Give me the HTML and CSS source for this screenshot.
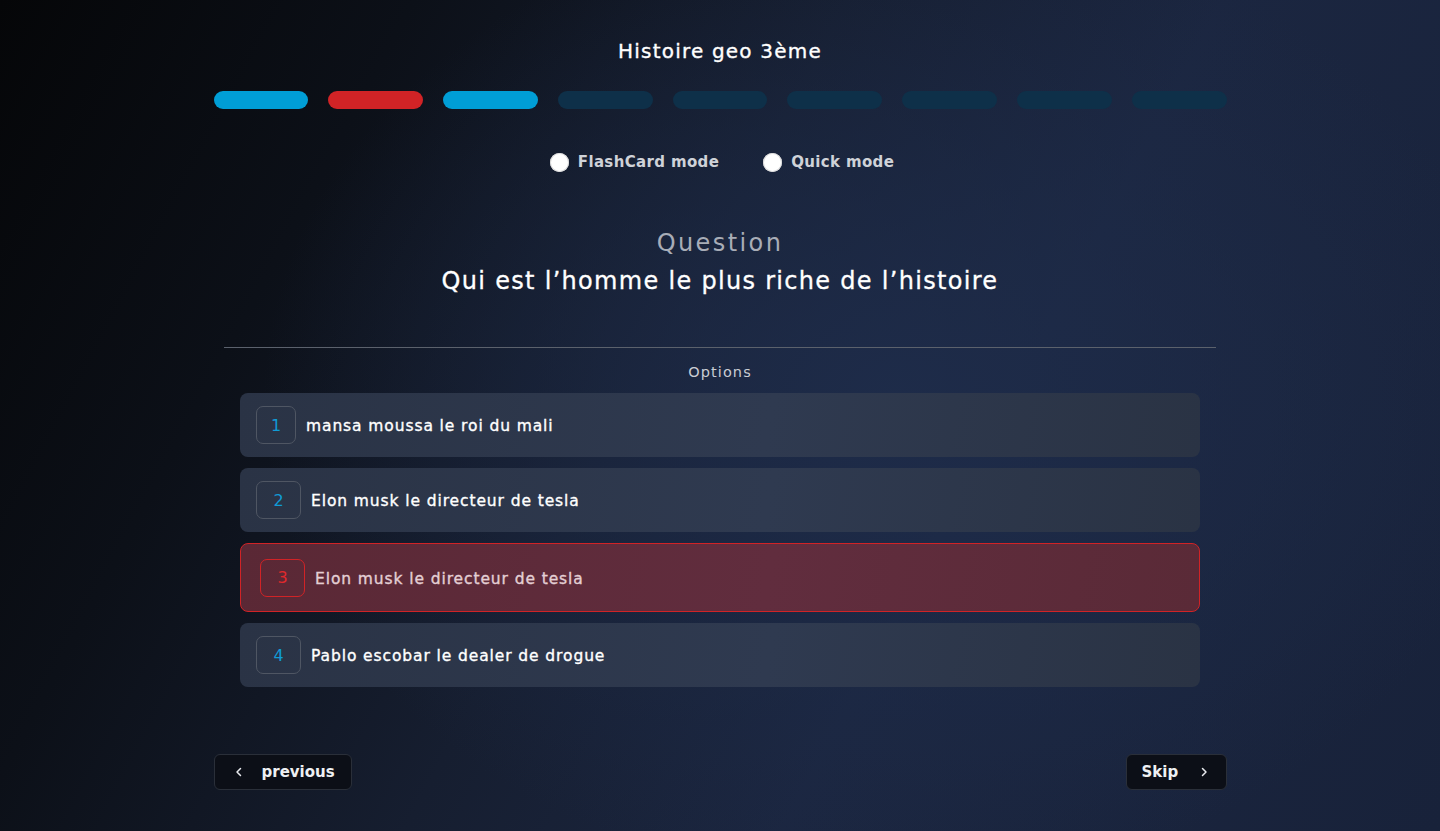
FILE: index.html
```html
<!DOCTYPE html>
<html lang="fr">
<head>
<meta charset="utf-8">
<title>Histoire geo 3ème</title>
<link rel="stylesheet" href="styles.css">
</head>
<body>
<main class="quiz">
  <h1 class="title">Histoire geo 3ème</h1>
  <div class="progress">
    <span class="bar done"></span>
    <span class="bar wrong"></span>
    <span class="bar done"></span>
    <span class="bar"></span>
    <span class="bar"></span>
    <span class="bar"></span>
    <span class="bar"></span>
    <span class="bar"></span>
    <span class="bar"></span>
  </div>
  <div class="modes">
    <label class="mode"><span class="radio"></span>FlashCard mode</label>
    <label class="mode"><span class="radio"></span>Quick mode</label>
  </div>
  <p class="q-label">Question</p>
  <h2 class="q-text">Qui est l’homme le plus riche de l’histoire</h2>
  <hr class="divider">
  <p class="opt-label">Options</p>
  <ul class="options">
    <li class="option"><span class="num">1</span><span class="opt-text">mansa moussa le roi du mali</span></li>
    <li class="option"><span class="num wide">2</span><span class="opt-text">Elon musk le directeur de tesla</span></li>
    <li class="option wrong"><span class="num wide">3</span><span class="opt-text">Elon musk le directeur de tesla</span></li>
    <li class="option"><span class="num wide">4</span><span class="opt-text">Pablo escobar le dealer de drogue</span></li>
  </ul>
  <div class="nav">
    <button class="btn prev"><svg width="10" height="10" viewBox="0 0 10 10"><path d="M6.5 1.5 3 5l3.5 3.5" fill="none" stroke="#e8eaee" stroke-width="1.5" stroke-linecap="round" stroke-linejoin="round"/></svg><span>previous</span></button>
    <button class="btn skip"><span>Skip</span><svg width="10" height="10" viewBox="0 0 10 10"><path d="M3.5 1.5 7 5 3.5 8.5" fill="none" stroke="#e8eaee" stroke-width="1.5" stroke-linecap="round" stroke-linejoin="round"/></svg></button>
  </div>
</main>
</body>
</html>
```
FILE: styles.css
```css
* { box-sizing: border-box; }
html, body { height: 100%; }
body {
  margin: 0;
  min-height: 831px;
  font-family: "DejaVu Sans", "Open Sans", sans-serif;
  color: #fff;
  background:
    radial-gradient(ellipse 900px 700px at 62% 48%, rgba(30,44,74,0.95) 0%, rgba(30,44,74,0) 70%),
    linear-gradient(118deg, #050608 0%, #0c1018 22%, #161e30 45%, #1b2640 65%, #18223a 100%);
  overflow: hidden;
}
.quiz {
  width: 1013px;
  margin: 0 auto;
  padding-top: 38px;
  display: flex;
  flex-direction: column;
  align-items: center;
}
.title {
  margin: 0;
  font-size: 20px;
  line-height: 26px;
  font-weight: 400;
  letter-spacing: 1.2px;
  -webkit-text-stroke: 0.35px #fff;
}
.progress {
  margin-top: 27px;
  width: 100%;
  display: flex;
  gap: 20px;
}
.bar {
  width: 95px;
  height: 18px;
  border-radius: 9px;
  background: #0e3049;
}
.bar.done { background: #009ed6; }
.bar.wrong { background: #d12326; }
.modes {
  margin-top: 43px;
  display: flex;
  gap: 44px;
  margin-left: 4px;
}
.mode {
  display: flex;
  align-items: center;
  gap: 9px;
  font-size: 15px;
  line-height: 20px;
  font-weight: 700;
  letter-spacing: 0.35px;
  color: #cfd2d8;
}
.radio {
  width: 19px;
  height: 19px;
  border-radius: 50%;
  background: #fff;
  box-shadow: inset 0 0 0 1px #d9d9d9;
}
.q-label {
  margin: 56px 0 0;
  font-size: 24px;
  line-height: 30px;
  font-weight: 400;
  letter-spacing: 2.4px;
  color: #a8adb7;
}
.q-text {
  margin: 8px 0 0;
  font-size: 24px;
  line-height: 30px;
  font-weight: 400;
  letter-spacing: 1.3px;
  -webkit-text-stroke: 0.3px #fff;
  color: #fff;
}
.divider {
  margin: 51px 0 0;
  width: 992px;
  border: 0;
  height: 1px;
  background: #5b616c;
}
.opt-label {
  margin: 15px 0 0;
  font-size: 14.5px;
  line-height: 18px;
  color: #c9cdd4;
  font-weight: 400;
  letter-spacing: 1.1px;
}
.options {
  list-style: none;
  margin: 12px 0 0;
  padding: 0;
  width: 960px;
  display: flex;
  flex-direction: column;
  gap: 11px;
}
.option {
  height: 64px;
  border-radius: 8px;
  background: linear-gradient(100deg, #2a3345 0%, #2f3a50 55%, #2a3344 100%);
  display: flex;
  align-items: center;
  padding-left: 16px;
  gap: 10px;
  font-size: 15.5px;
  font-weight: 400;
  letter-spacing: 0.9px;
}
.opt-text {
  padding-top: 2px;
  -webkit-text-stroke: 0.35px currentColor;
}
.num {
  width: 40px;
  height: 38px;
  border: 1px solid #4f5663;
  border-radius: 7px;
  display: flex;
  align-items: center;
  justify-content: center;
  color: #109bd6;
  font-size: 16px;
  font-weight: 400;
  letter-spacing: 0;
}
.num.wide { width: 45px; }
.option.wrong {
  height: 69px;
  background: linear-gradient(100deg, #5a2835 0%, #612d3e 55%, #5a2a37 100%);
  border: 1px solid #d12326;
  padding-left: 19px;
}
.option.wrong .num {
  border-color: #d12326;
  color: #e0292c;
}
.option.wrong .opt-text { color: #e4cfd4; }
.nav {
  margin-top: 67px;
  width: 100%;
  display: flex;
  justify-content: space-between;
}
.btn {
  height: 36px;
  border-radius: 6px;
  background: #0c0f17;
  border: 1px solid #2a2f39;
  color: #eef0f3;
  font-family: inherit;
  font-size: 15px;
  font-weight: 700;
  display: flex;
  align-items: center;
}
.prev { width: 138px; padding-left: 19px; gap: 18px; }
.skip { width: 101px; padding-left: 15px; gap: 21px; }
```
